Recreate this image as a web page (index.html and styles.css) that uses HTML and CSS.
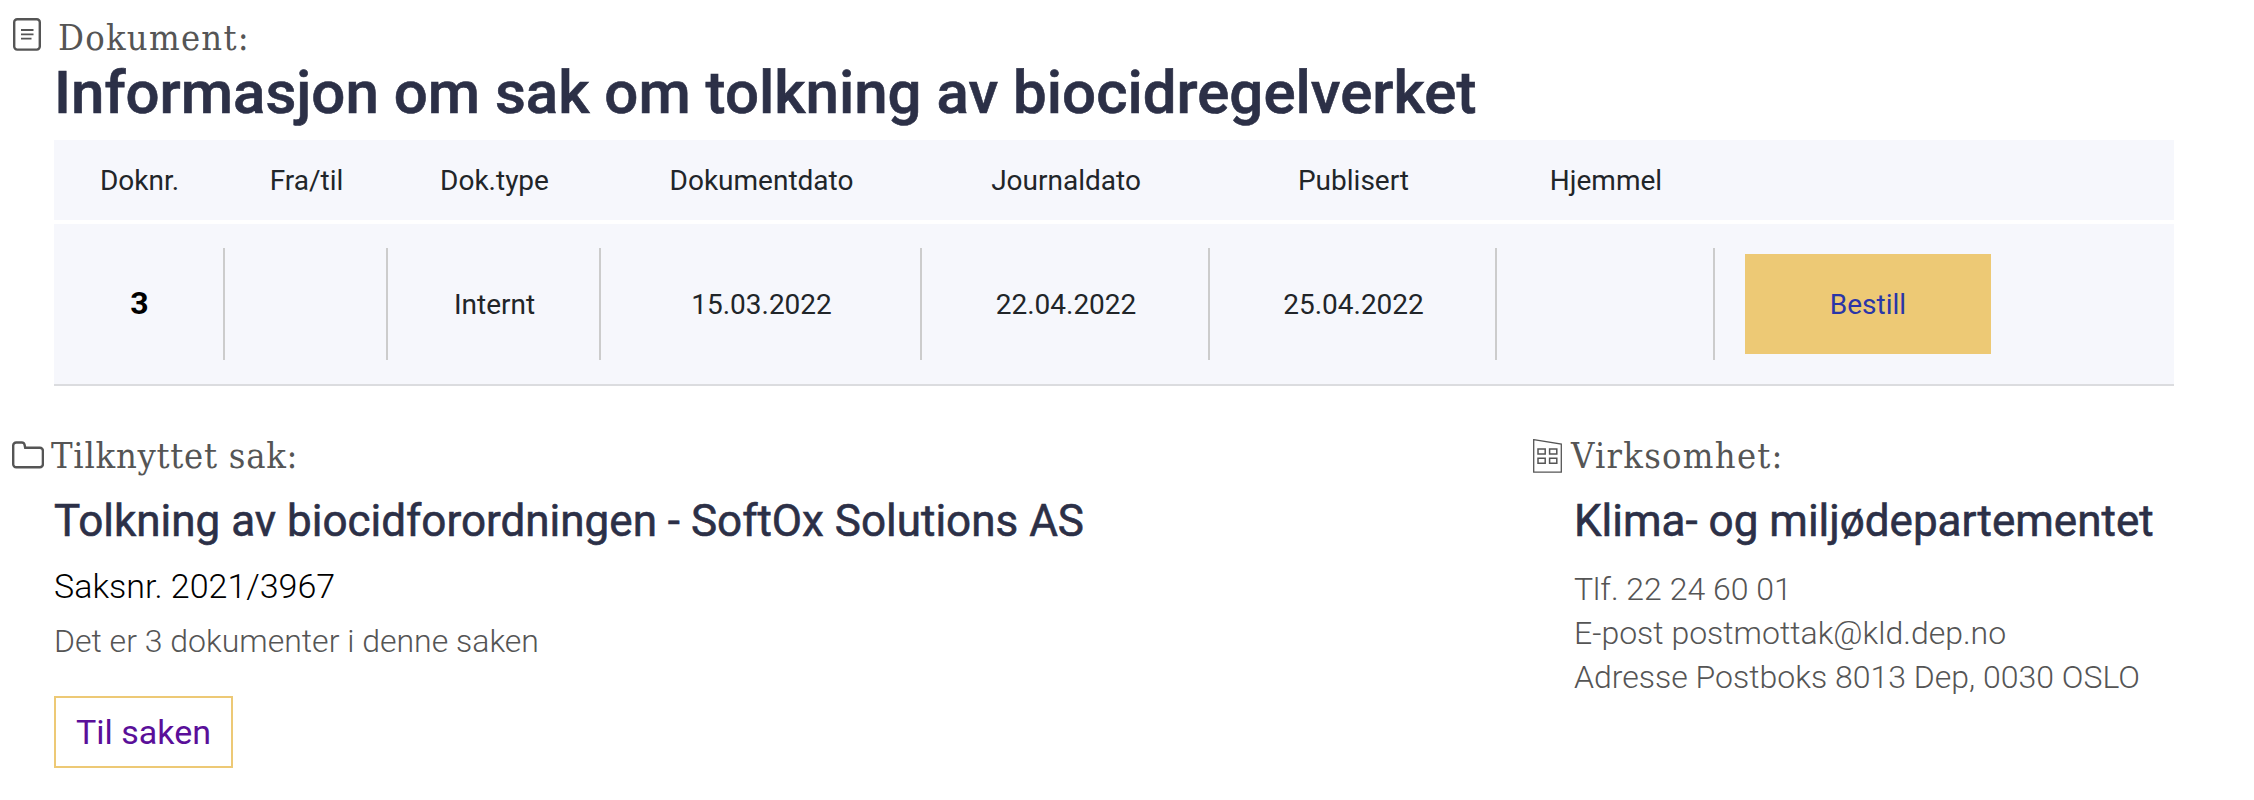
FILE: index.html
```
<!DOCTYPE html>
<html lang="no">
  <head>
    <meta charset="UTF-8" />
    <meta name="viewport" content="width=device-width, initial-scale=1.0" />
    <title>Informasjon om sak om tolkning av biocidregelverket</title>
    <link rel="stylesheet" href="styles.css">
  </head>
  <body>
    <div class="label label-document">
      <svg class="icon" viewBox="0 0 32 40">
        <rect x="2.2" y="1.2" width="25.6" height="30.4" rx="3" />
        <path d="M9 12h12.5M9 16.3h12.5M9 20.6h10.5" stroke-width="1.8" />
      </svg>
      <span class="label-text">Dokument:</span>
    </div>
    <h1>Informasjon om sak om tolkning av biocidregelverket</h1>

    <div class="table">
      <div class="row head">
        <div>Doknr.</div>
        <div>Fra/til</div>
        <div>Dok.type</div>
        <div>Dokumentdato</div>
        <div>Journaldato</div>
        <div>Publisert</div>
        <div>Hjemmel</div>
      </div>
      <div class="row data">
        <div class="cell number">3</div>
        <div class="cell"></div>
        <div class="cell">Internt</div>
        <div class="cell">15.03.2022</div>
        <div class="cell">22.04.2022</div>
        <div class="cell">25.04.2022</div>
        <div class="cell"></div>
        <a class="order">Bestill</a>
      </div>
    </div>

    <div class="details">
      <div class="case">
        <div class="label">
          <svg class="icon" viewBox="0 0 32 40">
            <path d="M1.2 28.3V9.5a3 3 0 0 1 3-3h5.6q2.2 0 2.7 2l.7 3.2h14.7a3 3 0 0 1 3 3v13.6a3 3 0 0 1-3 3H4.2a3 3 0 0 1-3-3z" />
          </svg>
          <span class="label-text label-case">Tilknyttet sak:</span>
        </div>
        <h2>Tolkning av biocidforordningen - SoftOx Solutions AS</h2>
        <div class="case-number">Saksnr. 2021/3967</div>
        <div class="case-count">Det er 3 dokumenter i denne saken</div>
        <a class="to-case">Til saken</a>
      </div>
      <div class="agency">
        <div class="label">
          <svg class="icon" viewBox="0 0 32 40">
            <path d="M1.7 3.7L29.3 8v28.2H1.7z" stroke-width="1.3" />
            <path d="M6 13.1h7.2v5H6zM17.6 13.1h7.2v5h-7.2zM6 22.2h7.2v5H6zM17.6 22.2h7.2v5h-7.2z" stroke-width="1.5" />
          </svg>
          <span class="label-text">Virksomhet:</span>
        </div>
        <h2>Klima- og miljødepartementet</h2>
        <div class="contact">
          <div>Tlf. 22 24 60 01</div>
          <div>E-post postmottak@kld.dep.no</div>
          <div>Adresse Postboks 8013 Dep, 0030 OSLO</div>
        </div>
      </div>
    </div>
  </body>
</html>
```
FILE: styles.css
```
body {
  margin: 0;
  padding: 18px 80px 0 12px;
  font-family: Roboto, sans-serif;
  color: #212529;
  background: #fff;
}
h1,
h2 {
  color: #2c3047;
  font-weight: 500;
  white-space: nowrap;
  -webkit-text-stroke: 0.6px #2c3047;
}
h1 {
  margin: 0 0 12px 42px;
  font-size: 60px;
  line-height: 70px;
}
h2 {
  margin: 15px 0 0 42px;
  font-size: 44px;
  line-height: 60px;
  font-weight: 400;
}
.label {
  display: flex;
  gap: 7px;
  height: 40px;
}
.label-document {
  gap: 14px;
}
.label-text {
  color: #555;
  font-family: "DejaVu Serif Condensed", "DejaVu Serif", serif;
  font-stretch: condensed;
  font-size: 36px;
  line-height: 40px;
  letter-spacing: 1.25px;
  white-space: nowrap;
}
.label-case {
  letter-spacing: 0.75px;
}
.icon {
  width: 32px;
  height: 40px;
  flex: none;
  fill: none;
  stroke: #555;
  stroke-width: 2.4;
}
.table {
  display: flex;
  flex-direction: column;
  gap: 4px;
  margin-left: 42px;
  font-size: 28px;
}
.row {
  display: grid;
  grid-template-columns: 171px 163px 213px 321px 288px 287px 218px 1fr;
  align-items: center;
  text-align: center;
  background: #f6f7fc;
}
.head {
  height: 80px;
}
.data {
  padding: 24px 0;
  border-bottom: 2px solid #dbdcdf;
}
.cell {
  box-sizing: border-box;
  height: 112px;
  padding-left: 2px;
  line-height: 113px;
  border-right: 2px solid #ccc;
}
.number {
  color: #000;
  font-size: 32px;
  font-weight: 700;
  line-height: 111px;
}
.order {
  width: 246px;
  height: 100px;
  margin-left: 30px;
  line-height: 101px;
  color: #2a36a8;
  background: #edc975;
}
.details {
  display: grid;
  grid-template-columns: 1520px 1fr;
  margin-top: 50px;
}
.case-number {
  margin: 13px 0 0 42px;
  color: #000;
  font-size: 34px;
  line-height: 45px;
  font-weight: 300;
}
.case-count {
  margin: 10px 0 33px 42px;
  color: #555;
  font-size: 32px;
  line-height: 44px;
  font-weight: 300;
}
.to-case {
  display: inline-block;
  margin-left: 42px;
  padding: 0 20px;
  border: 2px solid #edc975;
  color: #5a0f99;
  font-size: 34px;
  line-height: 68px;
}
.contact {
  margin: 16px 0 0 42px;
  color: #555;
  font-size: 32px;
  line-height: 44px;
  font-weight: 300;
  white-space: nowrap;
}
```
